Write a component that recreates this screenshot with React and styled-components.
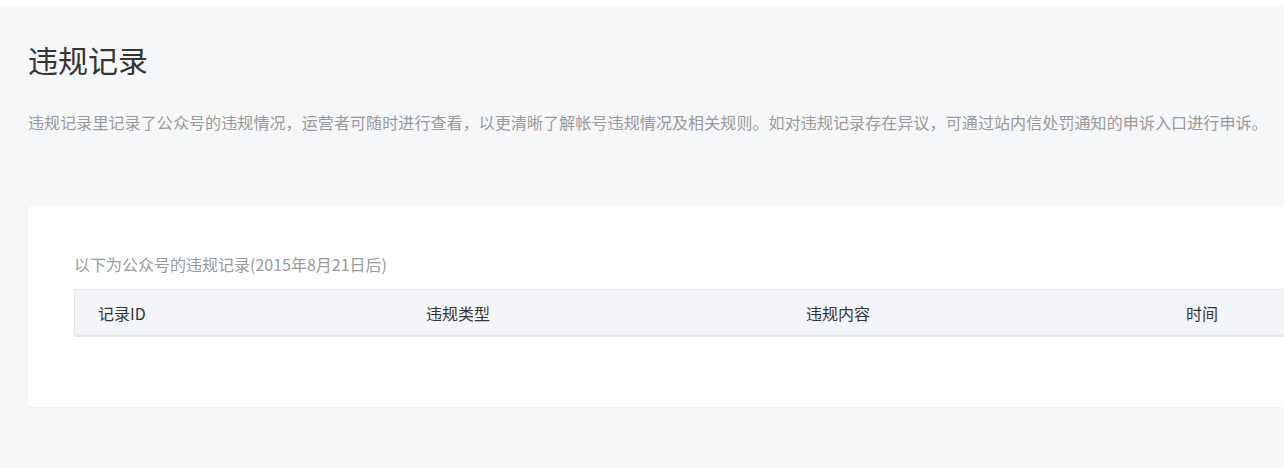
import React from "react";
import styled, { createGlobalStyle } from "styled-components";

const Global = createGlobalStyle`
  html, body {
    margin: 0;
    padding: 0;
    background: #ffffff;
    overflow: hidden;
  }
  body {
    font-family: "Noto Sans CJK SC", "Noto Sans", sans-serif;
  }
`;

const Page = styled.div`
  margin-top: 6px;
  background: #f6f7f9;
  min-height: 462px;
  padding: 35px 0 0 28px;
  box-sizing: border-box;
`;

const Title = styled.h2`
  margin: 0;
  font-size: 30px;
  line-height: 36px;
  font-weight: 400;
  color: #353535;
`;

const Desc = styled.p`
  margin: 33px 0 0;
  font-size: 16px;
  line-height: 24px;
  letter-spacing: 0.1px;
  color: #9a9a9a;
  white-space: nowrap;
`;

const Card = styled.section`
  margin-top: 72px;
  width: 1300px;
  background: #ffffff;
  border-radius: 4px;
  box-shadow: 0 1px 3px rgba(0, 0, 0, 0.04);
  padding: 46px 0 70px 46px;
  box-sizing: border-box;
`;

const SubTitle = styled.div`
  font-size: 16px;
  line-height: 24px;
  color: #9a9a9a;
  margin-bottom: 13px;
`;

const TableHead = styled.div`
  display: grid;
  grid-template-columns: 328px 380px 380px 1fr;
  background: #f4f5f9;
  border-top: 1px solid #e4e6eb;
  border-left: 1px solid #e4e6eb;
  border-bottom: 2px solid #e4e6eb;
  height: 45px;
  align-items: center;
`;

const HeadCell = styled.div`
  padding-left: 23px;
  font-size: 16px;
  color: #353535;
  white-space: nowrap;
`;

const columns = ["记录ID", "违规类型", "违规内容", "时间"];

export default function App() {
  return (
    <>
      <Global />
      <Page>
        <Title>违规记录</Title>
        <Desc>
          违规记录里记录了公众号的违规情况，运营者可随时进行查看，以更清晰了解帐号违规情况及相关规则。如对违规记录存在异议，可通过站内信处罚通知的申诉入口进行申诉。
        </Desc>
        <Card>
          <SubTitle>以下为公众号的违规记录(2015年8月21日后)</SubTitle>
          <TableHead>
            {columns.map((c) => (
              <HeadCell key={c}>{c}</HeadCell>
            ))}
          </TableHead>
        </Card>
      </Page>
    </>
  );
}
